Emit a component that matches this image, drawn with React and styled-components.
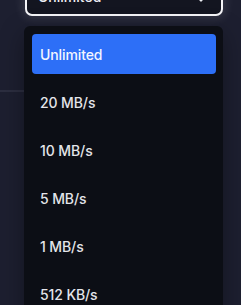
import React, { useState } from "react";
import styled, { createGlobalStyle } from "styled-components";
import { ChevronDown } from "lucide-react";

const OPTIONS = ["Unlimited", "20 MB/s", "10 MB/s", "5 MB/s", "1 MB/s", "512 KB/s"];

const Global = createGlobalStyle`
  html, body { margin: 0; padding: 0; background: #1d1f30; }
  body {
    font-family: Inter, "Noto Sans", sans-serif;
    -webkit-font-smoothing: antialiased;
  }
`;

const Page = styled.div`
  position: relative;
  width: 241px;
  height: 305px;
  overflow: hidden;
  background: #1d1f30;
`;

const Header = styled.div`
  height: 90px;
  width: 140px;
  border-bottom: 2px solid #2c2e40;
`;

const Select = styled.div`
  position: absolute;
  left: 24px;
  top: -24px;
  width: 199px;
  display: flex;
  flex-direction: column;
  gap: 10px;
`;

const Trigger = styled.button`
  height: 40px;
  margin: 0 0 0 1px;
  width: 198px;
  box-sizing: border-box;
  display: flex;
  align-items: center;
  justify-content: space-between;
  padding: 0 12px 0 11px;
  background: #131520;
  border: 2px solid #f4f4f7;
  border-radius: 7px;
  box-shadow: 0 0 10px 3px rgba(255, 255, 255, 0.1);
  color: #eceef3;
  font-family: inherit;
  font-size: 14px;
  font-weight: 500;
  svg { margin-top: 5px; }
`;

const Menu = styled.ul`
  list-style: none;
  margin: 0;
  padding: 8px 7px 8px 8px;
  background: #0c0e15;
  border-radius: 6px;
  display: flex;
  flex-direction: column;
  gap: 8px;
  box-shadow: 0 8px 24px rgba(0, 0, 0, 0.35);
`;

const Item = styled.li`
  height: 40px;
  display: flex;
  align-items: center;
  padding: 0 8px;
  border-radius: 4px;
  background: ${(p) => (p.active ? "#2d6ff7" : "transparent")};
  color: ${(p) => (p.active ? "#f3f6ff" : "#e4e5ea")};
  font-size: 14px;
  font-weight: 500;
  letter-spacing: -0.1px;
  cursor: pointer;
`;

export default function App() {
  const [value, setValue] = useState(OPTIONS[0]);
  return (
    <Page>
      <Global />
      <Header />
      <Select>
        <Trigger>
          <span>{value}</span>
          <ChevronDown size={16} strokeWidth={2} />
        </Trigger>
        <Menu>
          {OPTIONS.map((o) => (
            <Item key={o} active={o === value} onClick={() => setValue(o)}>
              {o}
            </Item>
          ))}
        </Menu>
      </Select>
    </Page>
  );
}
